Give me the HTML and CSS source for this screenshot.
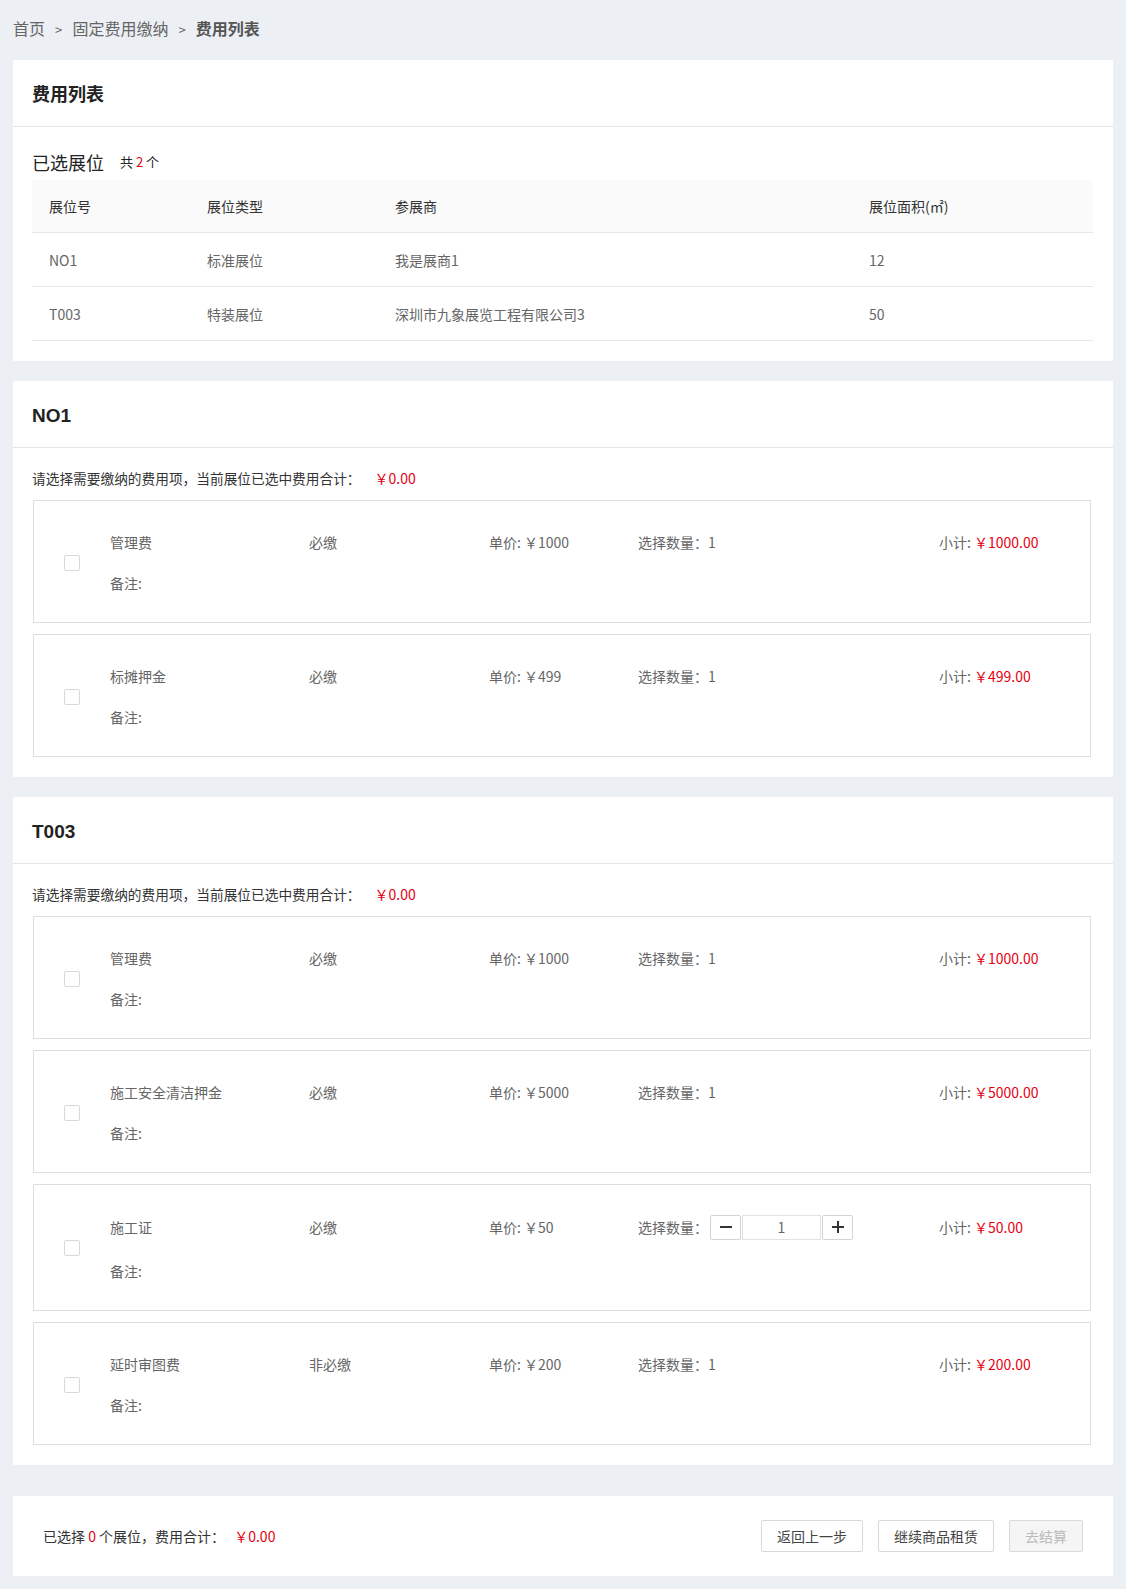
FILE: index.html
```html
<!DOCTYPE html>
<html lang="zh-CN">

<head>
    <meta charset="utf-8">
    <meta name="viewport" content="width=device-width, initial-scale=1.0">
    <title>费用列表</title>
    <link rel="stylesheet" href="styles.css">
</head>

<body>

    <div class="crumbs">
        <span>首页</span>
        <i>&gt;</i>
        <span>固定费用缴纳</span>
        <i>&gt;</i>
        <b>费用列表</b>
    </div>

    <div class="card">
        <div class="card-head">费用列表</div>
        <div class="card-body">
            <div class="selected">已选展位 <small>共 <em>2</em> 个</small></div>
            <div class="booths">
                <div class="row head">
                    <span class="c1">展位号</span>
                    <span class="c2">展位类型</span>
                    <span class="c3">参展商</span>
                    <span>展位面积(㎡)</span>
                </div>
                <div class="row">
                    <span class="c1">NO1</span>
                    <span class="c2">标准展位</span>
                    <span class="c3">我是展商1</span>
                    <span>12</span>
                </div>
                <div class="row">
                    <span class="c1">T003</span>
                    <span class="c2">特装展位</span>
                    <span class="c3">深圳市九象展览工程有限公司3</span>
                    <span>50</span>
                </div>
            </div>
        </div>
    </div>

    <div class="card">
        <div class="card-head big">NO1</div>
        <div class="card-body">
            <div class="tip">请选择需要缴纳的费用项，当前展位已选中费用合计： <em>￥0.00</em></div>
            <div class="fee">
                <span class="check"></span>
                <span>管理费</span>
                <span>必缴</span>
                <span>单价: ￥1000</span>
                <span>选择数量：1</span>
                <span>小计: <em>￥1000.00</em></span>
                <span class="note">备注:</span>
            </div>
            <div class="fee">
                <span class="check"></span>
                <span>标摊押金</span>
                <span>必缴</span>
                <span>单价: ￥499</span>
                <span>选择数量：1</span>
                <span>小计: <em>￥499.00</em></span>
                <span class="note">备注:</span>
            </div>
        </div>
    </div>

    <div class="card">
        <div class="card-head big">T003</div>
        <div class="card-body">
            <div class="tip">请选择需要缴纳的费用项，当前展位已选中费用合计： <em>￥0.00</em></div>
            <div class="fee">
                <span class="check"></span>
                <span>管理费</span>
                <span>必缴</span>
                <span>单价: ￥1000</span>
                <span>选择数量：1</span>
                <span>小计: <em>￥1000.00</em></span>
                <span class="note">备注:</span>
            </div>
            <div class="fee">
                <span class="check"></span>
                <span>施工安全清洁押金</span>
                <span>必缴</span>
                <span>单价: ￥5000</span>
                <span>选择数量：1</span>
                <span>小计: <em>￥5000.00</em></span>
                <span class="note">备注:</span>
            </div>
            <div class="fee tall">
                <span class="check"></span>
                <span>施工证</span>
                <span>必缴</span>
                <span>单价: ￥50</span>
                <span class="qty">选择数量：
                    <span class="stepper">
                        <button>
                            <svg width="14" height="14" viewBox="0 0 14 14"><path d="M1 7h12" stroke="#333" stroke-width="2"/></svg>
                        </button>
                        <input value="1">
                        <button>
                            <svg width="14" height="14" viewBox="0 0 14 14"><path d="M1 7h12M7 1v12" stroke="#333" stroke-width="2"/></svg>
                        </button>
                    </span>
                </span>
                <span>小计: <em>￥50.00</em></span>
                <span class="note">备注:</span>
            </div>
            <div class="fee">
                <span class="check"></span>
                <span>延时审图费</span>
                <span>非必缴</span>
                <span>单价: ￥200</span>
                <span>选择数量：1</span>
                <span>小计: <em>￥200.00</em></span>
                <span class="note">备注:</span>
            </div>
        </div>
    </div>

    <div class="card footer">
        <div class="sum">已选择 <em>0</em> 个展位，费用合计： <em>￥0.00</em></div>
        <div class="btns">
            <button class="btn">返回上一步</button>
            <button class="btn">继续商品租赁</button>
            <button class="btn off">去结算</button>
        </div>
    </div>

</body>

</html>
```

FILE: styles.css
```css
*,
body * {
    box-sizing: border-box;
}

body {
    margin: 0;
    padding: 6px 13px 13px 13px;
    background-color: #eceff4;
    font-family: "Microsoft YaHei", "Noto Sans CJK SC", sans-serif;
    font-size: 14px;
    color: #666;
}

em {
    font-style: normal;
    color: #e60012;
}

.crumbs {
    font-size: 16px;
    line-height: 44px;
    height: 54px;
    color: #666;
}

.crumbs i {
    font-style: normal;
    font-size: 13px;
    margin: 0 6.5px;
}

.crumbs b {
    color: #555;
}

.card {
    background-color: #fff;
    margin-bottom: 20px;
}

.card-head {
    height: 67px;
    line-height: 66px;
    padding-left: 19px;
    font-size: 18px;
    font-weight: bold;
    color: #222;
    border-bottom: 1px solid #e5e5e5;
}

.card-head.big {
    font-family: "Liberation Sans", "Noto Sans CJK SC", sans-serif;
    font-size: 19px;
    line-height: 70px;
}

.card-body {
    padding: 20px 20px 20px 19px;
}

.selected {
    height: 33px;
    line-height: 30px;
    font-size: 18px;
    color: #222;
    overflow: hidden;
}

.selected small {
    font-size: 13px;
    margin-left: 12px;
    vertical-align: top;
}

.booths {
    font-size: 14px;
}

.row {
    display: flex;
    align-items: center;
    height: 54px;
    padding-left: 17px;
    border-bottom: 1px solid #e8e8e8;
}

.row.head {
    height: 53px;
    background-color: #fafafa;
    color: #333;
}

.row .c1 {
    width: 158px;
}

.row .c2 {
    width: 188px;
}

.row .c3 {
    width: 474px;
}

.tip {
    height: 20px;
    line-height: 20px;
    font-size: 13.7px;
    color: #333;
    margin-bottom: 12px;
}

.tip em {
    font-size: 14px;
    margin-left: 11px;
}

.fee {
    display: grid;
    grid-template-columns: 76px 199px 180px 149px 301px 1fr;
    grid-template-rows: 22px 22px;
    row-gap: 19px;
    align-items: center;
    align-content: start;
    height: 123px;
    border: 1px solid #dedede;
    margin: 0 2px 11px 1px;
    padding-top: 30px;
    font-size: 14px;
}

.fee.tall {
    height: 127px;
    grid-template-rows: 26px 22px;
    row-gap: 20px;
    padding-top: 29px;
}

.fee:last-child {
    margin-bottom: 0;
}

.fee .check {
    grid-row: 1 / 3;
    width: 16px;
    height: 16px;
    margin-left: 30px;
    border: 1px solid #d9d9d9;
    border-radius: 2px;
}

.fee .note {
    grid-column: 2;
}

.qty {
    display: flex;
    align-items: center;
}

.stepper {
    display: flex;
    margin-left: 2px;
}

.stepper button {
    width: 31px;
    height: 25px;
    padding: 0;
    border: 1px solid #d4d4d4;
    border-radius: 2px;
    background-color: #fff;
    display: flex;
    align-items: center;
    justify-content: center;
}

.stepper input {
    width: 79px;
    height: 25px;
    margin: 0 1px;
    border: 1px solid #e2e2e2;
    text-align: center;
    font-family: inherit;
    font-size: 14px;
    color: #666;
}

.footer {
    margin-top: 31px;
    margin-bottom: 0;
    height: 80px;
    display: flex;
    align-items: center;
    justify-content: space-between;
    padding: 0 30px 0 30px;
}

.sum {
    font-size: 14px;
    color: #333;
}

.sum em:last-child {
    margin-left: 6px;
}

.btns {
    display: flex;
    gap: 15px;
}

.btn {
    height: 32px;
    padding: 0 15px;
    border: 1px solid #d9d9d9;
    border-radius: 2px;
    background-color: #fff;
    font-family: inherit;
    font-size: 14px;
    color: #444;
}

.btn.off {
    background-color: #f5f5f5;
    color: #bbb;
}
```
